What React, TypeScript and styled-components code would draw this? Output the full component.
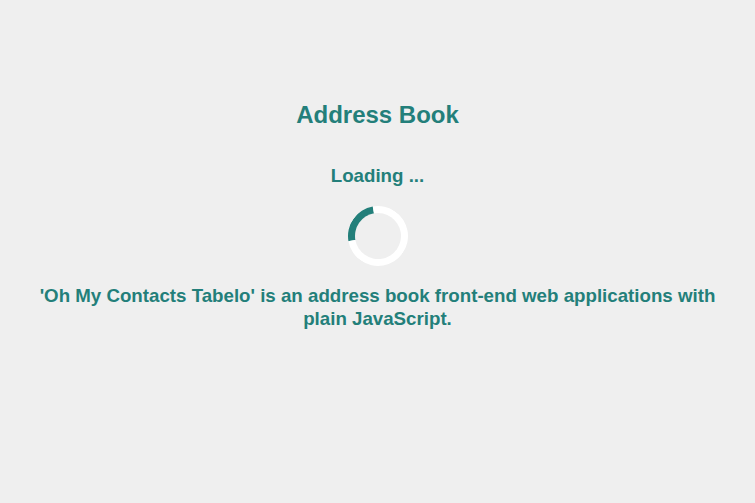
import React from 'react';
import styled, { createGlobalStyle } from 'styled-components';

const GlobalStyle = createGlobalStyle`
  html, body {
    margin: 0;
    padding: 0;
    background-color: #efefef;
    font-family: "Liberation Sans", Arial, sans-serif;
  }
`;

const Page = styled.main`
  display: flex;
  flex-direction: column;
  align-items: center;
  padding: 101px 8px 0;
  color: #237f7a;
  text-align: center;
`;

const Title = styled.h1`
  margin: 0;
  font-size: 24px;
  line-height: 28px;
  font-weight: bold;
`;

const Status = styled.h3`
  margin: 35px 0 0;
  font-size: 18.72px;
  line-height: 23px;
  font-weight: bold;
`;

const Spinner = styled.div`
  box-sizing: border-box;
  width: 60px;
  height: 60px;
  margin-top: 19px;
  border-radius: 50%;
  border: 7px solid #ffffff;
  border-top-color: #237f7a;
  transform: rotate(-55deg);
`;

const About = styled.p`
  margin: 18px 0 0;
  max-width: 700px;
  font-size: 18.72px;
  line-height: 23px;
  font-weight: bold;
`;

const App: React.FC = () => {
  return (
    <>
      <GlobalStyle />
      <Page>
        <Title>Address Book</Title>
        <Status>Loading ...</Status>
        <Spinner />
        <About>
          'Oh My Contacts Tabelo' is an address book front-end web applications with plain JavaScript.
        </About>
      </Page>
    </>
  );
};

export default App;
